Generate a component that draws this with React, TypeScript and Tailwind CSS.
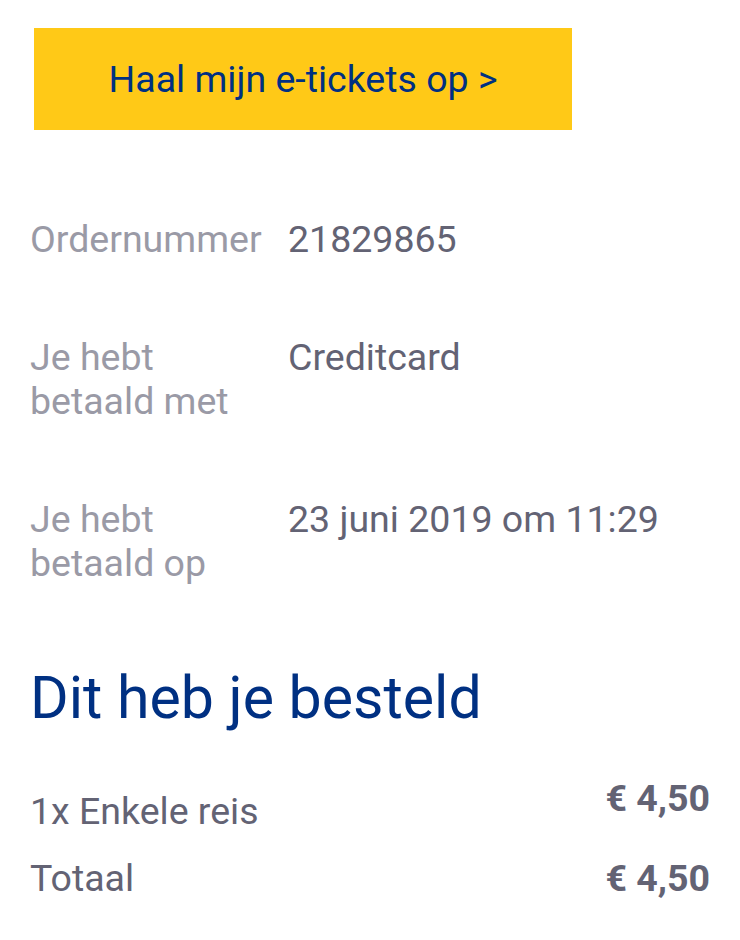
export default function App() {
  const rows = [
    { label: "Ordernummer", value: "21829865" },
    { label: "Je hebt betaald met", value: "Creditcard" },
    { label: "Je hebt betaald op", value: "23 juni 2019 om 11:29" },
  ];

  return (
    <div className="min-h-[940px] bg-white px-[30px] pt-[28px] font-['Roboto',sans-serif]">
      <button className="ml-[4px] flex h-[102px] w-[538px] items-center justify-center bg-[#ffc917] text-[37.5px] text-[#003082]">
        Haal mijn e-tickets op &gt;
      </button>

      <div className="mt-[87px] flex flex-col gap-[74px]">
        {rows.map((r) => (
          <div key={r.label} className="flex text-[37.5px] leading-[44px]">
            <div className="w-[258px] pr-[16px] text-[#9a9aa6]">{r.label}</div>
            <div className="text-[#636374]">{r.value}</div>
          </div>
        ))}
      </div>

      <h2 className="mt-[78px] text-[59px] leading-[70px] text-[#003082]">Dit heb je besteld</h2>

      <div className="mt-[43px] flex flex-col text-[37.5px] text-[#636374]">
        <div className="flex items-start justify-between">
          <span className="pt-[13px] leading-[44px]">1x Enkele reis</span>
          <span className="font-bold leading-[44px]">€ 4,50</span>
        </div>
        <div className="mt-[23px] flex items-start justify-between">
          <span className="leading-[44px]">Totaal</span>
          <span className="font-bold leading-[44px]">€ 4,50</span>
        </div>
      </div>
    </div>
  );
}
